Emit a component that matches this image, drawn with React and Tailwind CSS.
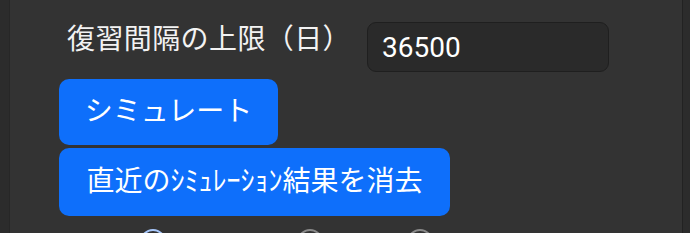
import React from "react";

const font = "font-['Roboto','Noto_Sans_CJK_JP',sans-serif]";

export default function App() {
  return (
    <div className={`flex h-[233px] w-[690px] overflow-hidden bg-[#2c2c2c] ${font}`}>
      <div className="w-[10px] shrink-0 border-r border-[#272727]" />

      <div className="flex flex-1 flex-col bg-[#333333] pl-[49px]">
        {/* limit row */}
        <div className="mt-[16px] flex shrink-0 items-start">
          <label className="ml-[8px] mt-[3px] w-[300px] text-[28px] leading-[42px] tracking-[0.4px] text-[#f2f2f2]">
            復習間隔の上限（日）
          </label>
          <input
            className="mt-[6px] h-[50px] w-[242px] rounded-[9px] border border-[#1f1f1f] bg-[#2a2a2a] px-[14px] text-[28px] text-white outline-none"
            defaultValue="36500"
          />
        </div>

        <button className="mt-[7px] h-[66px] w-[219px] shrink-0 rounded-[10px] bg-[#0e6ffb] text-[28px] leading-[42px] text-white">
          シミュレート
        </button>
        <button className="mt-[3px] h-[68px] w-[391px] shrink-0 rounded-[10px] bg-[#0e6ffb] text-[28px] leading-[42px] text-white">
          直近のｼﾐｭﾚｰｼｮﾝ結果を消去
        </button>

        {/* radio options, cut off at the bottom */}
        <div className="mt-[13px] flex shrink-0">
          <span className="ml-[81px] h-[26px] w-[26px] shrink-0 rounded-full border-2 border-[#a8c7fa]" />
          <span className="ml-[131px] h-[26px] w-[26px] shrink-0 rounded-full border-2 border-[#8a8a8a]" />
          <span className="ml-[84px] h-[26px] w-[26px] shrink-0 rounded-full border-2 border-[#8a8a8a]" />
        </div>
      </div>

      <div className="w-[8px] shrink-0 border-l border-[#222222]" />
    </div>
  );
}
